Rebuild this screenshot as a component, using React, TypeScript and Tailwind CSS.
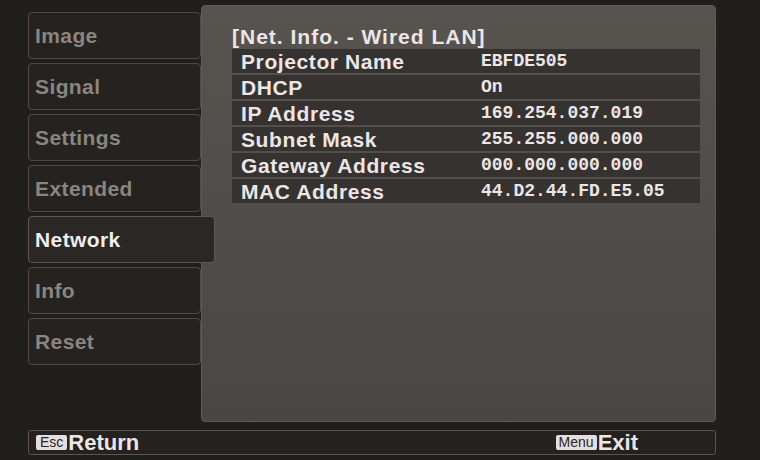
import React from 'react';

const menuItems = ['Image', 'Signal', 'Settings', 'Extended', 'Network', 'Info', 'Reset'];

const rows = [
  { label: 'Projector Name', value: 'EBFDE505' },
  { label: 'DHCP', value: 'On' },
  { label: 'IP Address', value: '169.254.037.019' },
  { label: 'Subnet Mask', value: '255.255.000.000' },
  { label: 'Gateway Address', value: '000.000.000.000' },
  { label: 'MAC Address', value: '44.D2.44.FD.E5.05' },
];

const sans = { fontFamily: '"Liberation Sans", Arial, sans-serif' };

const App = () => {
  return (
    <div
      className="w-[760px] h-[460px] bg-[#211f1c] flex flex-col overflow-hidden text-[#ebe5e7]"
      style={sans}
    >
      <div className="flex pt-[5px] pl-[28px] h-[422px]">
        {/* left menu */}
        <div className="w-[173px] shrink-0 flex flex-col gap-[4px] pt-[7px]">
          {menuItems.map((item) => {
            const active = item === 'Network';
            return (
              <div
                key={item}
                className={`h-[47px] flex items-center pl-[6px] rounded-[4px] border text-[21px] font-bold tracking-[0.4px] ${
                  active
                    ? 'w-[187px] relative z-10 bg-[#2a2724] border-[#5c5752] text-[#f1ecee]'
                    : 'w-[173px] bg-[#25221f] border-[#4f4a46] text-[#8a8581]'
                }`}
              >
                {item}
              </div>
            );
          })}
        </div>

        {/* panel */}
        <div className="w-[515px] h-[417px] rounded-[4px] bg-gradient-to-b from-[#57534f] to-[#4a4643] border border-[#5f5a55] pl-[30px] pt-[19px]">
          <div className="text-[21px] font-bold leading-[23px] h-[23px] tracking-[1px]">[Net. Info. - Wired LAN]</div>
          <div className="w-[468px] flex flex-col gap-[2px] mt-[1px]">
            {rows.map((r) => (
              <div key={r.label} className="h-[24px] bg-[#36322f] flex items-center">
                <div className="w-[249px] pl-[9px] text-[21px] font-bold leading-none tracking-[0.6px]">{r.label}</div>
                <div
                  className="text-[18px] font-bold leading-none"
                  style={{ fontFamily: '"Liberation Mono", "Courier New", monospace' }}
                >
                  {r.value}
                </div>
              </div>
            ))}
          </div>
        </div>
      </div>

      {/* bottom bar */}
      <div className="mt-[8px] ml-[28px] w-[688px] h-[25px] rounded-[3px] border border-[#5a5550] bg-[#24211f] flex items-center pl-[7px] pr-[77px]">
        <div className="flex items-center">
          <span className="h-[15px] px-[4px] bg-[#e4dee0] text-[#2a2624] text-[14px] leading-[15px] rounded-[2px]">Esc</span>
          <span className="text-[22px] font-bold leading-none ml-[1px]">Return</span>
        </div>
        <div className="flex items-center ml-auto">
          <span className="h-[15px] px-[3px] bg-[#e4dee0] text-[#2a2624] text-[14px] leading-[15px] rounded-[2px]">Menu</span>
          <span className="text-[22px] font-bold leading-none ml-[1px]">Exit</span>
        </div>
      </div>
    </div>
  );
};

export default App;
